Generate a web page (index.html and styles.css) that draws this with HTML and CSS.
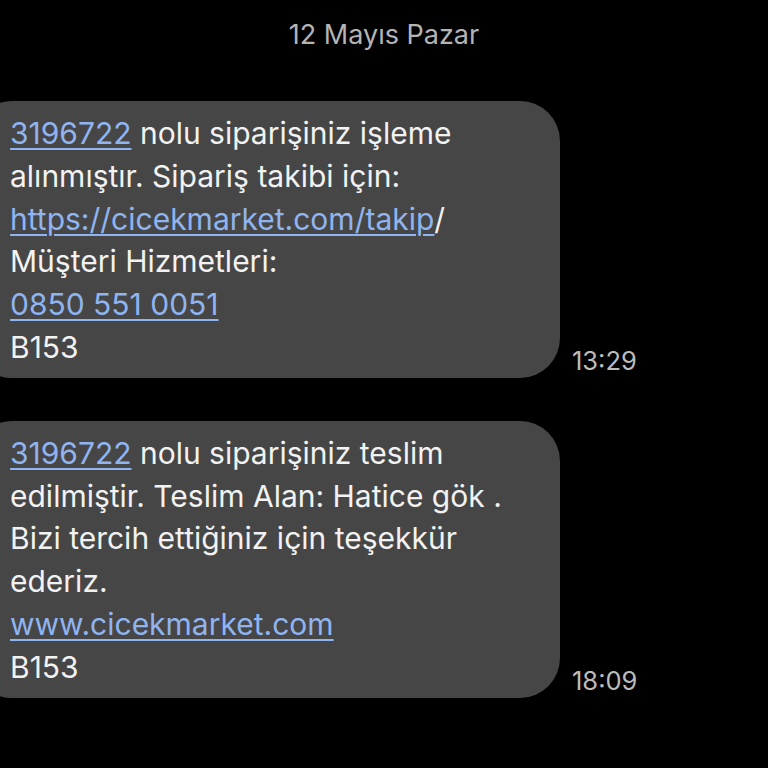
FILE: index.html
```html
<!DOCTYPE html>
<html lang="tr">
<head>
    <meta name="viewport" content="width=device-width, initial-scale=1">
    <title>Mesajlar</title>
    <link rel="stylesheet" href="styles.css">
</head>
<body>

    <p class="date">12 Mayıs Pazar</p>

    <div class="thread">
        <div class="row">
            <div class="bubble">
                <a href="#">3196722</a> nolu siparişiniz işleme<br>
                alınmıştır. Sipariş takibi için:<br>
                <a href="#">https://cicekmarket.com/takip</a>/<br>
                Müşteri Hizmetleri:<br>
                <a href="#">0850 551 0051</a><br>
                B153
            </div>
            <span class="time">13:29</span>
        </div>

        <div class="row">
            <div class="bubble">
                <a href="#">3196722</a> nolu siparişiniz teslim<br>
                edilmiştir. Teslim Alan: Hatice gök .<br>
                Bizi tercih ettiğiniz için teşekkür<br>
                ederiz.<br>
                <a href="#">www.cicekmarket.com</a><br>
                B153
            </div>
            <span class="time">18:09</span>
        </div>
    </div>

</body>
</html>
```

FILE: styles.css
```css
body {
    margin: 0;
    background-color: #000;
    color: #f2f2f2;
    font-family: Inter, 'Noto Sans', sans-serif;
    overflow: hidden;
}

.date {
    margin: 16px 0 0;
    text-align: center;
    font-size: 27px;
    line-height: 38px;
    color: #b4b4b4;
}

.thread {
    margin-top: 47px;
    display: flex;
    flex-direction: column;
    gap: 43px;
}

.row {
    display: flex;
    align-items: flex-end;
    gap: 12px;
}

.bubble {
    width: 550px;
    margin-left: -28px;
    padding: 11px 0 9px 38px;
    background-color: #464646;
    border-radius: 40px;
    font-size: 30px;
    line-height: 42.8px;
    white-space: nowrap;
}

.bubble a {
    color: #8fb4f0;
    text-decoration: underline;
    text-decoration-thickness: 2px;
    text-underline-offset: 4px;
}

.time {
    font-size: 25.5px;
    line-height: 30px;
    color: #bcbcbc;
    padding-bottom: 2px;
}
```
